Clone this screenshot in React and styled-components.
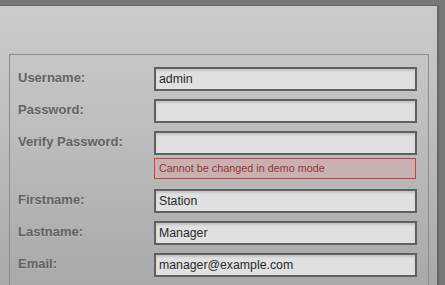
import React from "react";
import styled, { createGlobalStyle } from "styled-components";

const Global = createGlobalStyle`
  html, body { margin: 0; padding: 0; background: #787878; height: 100%; overflow: hidden; }
  body { font-family: "Liberation Sans", Arial, sans-serif; }
  #root { height: 100%; }
`;

const Page = styled.div`
  padding: 5px 6px 0 0;
  height: 100%;
  box-sizing: border-box;
`;

const Panel = styled.div`
  border-top: 1px solid #666;
  border-right: 2px solid #666;
  background: linear-gradient(#cbcbcb 0%, #bdbdbd 45%, #a9a9a9 100%);
  padding: 48px 8px 0 9px;
  height: 100%;
  box-sizing: border-box;
`;

const Fieldset = styled.div`
  border: 1px solid #8c8c8c;
  border-bottom: none;
  padding: 12px 11px 20px 8px;
  display: flex;
  flex-direction: column;
  gap: 8px;
  height: 100%;
  box-sizing: border-box;
`;

const Row = styled.div`
  display: flex;
  align-items: flex-start;
`;

const Label = styled.label`
  width: 136px;
  flex: none;
  font-size: 13px;
  font-weight: bold;
  color: #636363;
  line-height: 22px;
  text-shadow: 0 1px 0 rgba(255, 255, 255, 0.15);
`;

const Field = styled.div`
  display: flex;
  flex-direction: column;
`;

const Input = styled.input`
  width: 263px;
  height: 24px;
  box-sizing: border-box;
  border: 2px solid #606060;
  background: #e0e0e0;
  box-shadow: inset 0 2px 2px rgba(0, 0, 0, 0.12);
  padding: 0 3px;
  font-family: "Liberation Sans", Arial, sans-serif;
  font-size: 12.3px;
  color: #2a2a2a;
  outline: none;
  margin: 0;
`;

const ErrorBox = styled.div`
  margin-top: 3px;
  margin-bottom: 2px;
  width: 262px;
  height: 21px;
  box-sizing: border-box;
  border: 1px solid #d33a3a;
  background: #c7b1b1;
  color: #9b3434;
  font-size: 10.8px;
  line-height: 19px;
  padding-left: 4px;
`;

const fields = [
  { label: "Username:", value: "admin" },
  { label: "Password:", value: "", type: "password" },
  { label: "Verify Password:", value: "", type: "password", error: "Cannot be changed in demo mode" },
  { label: "Firstname:", value: "Station" },
  { label: "Lastname:", value: "Manager" },
  { label: "Email:", value: "manager@example.com" },
];

export default function App() {
  return (
    <>
      <Global />
      <Page>
        <Panel>
          <Fieldset>
            {fields.map((f) => (
              <Row key={f.label}>
                <Label>{f.label}</Label>
                <Field>
                  <Input type={f.type || "text"} defaultValue={f.value} readOnly />
                  {f.error && <ErrorBox>{f.error}</ErrorBox>}
                </Field>
              </Row>
            ))}
          </Fieldset>
        </Panel>
      </Page>
    </>
  );
}
